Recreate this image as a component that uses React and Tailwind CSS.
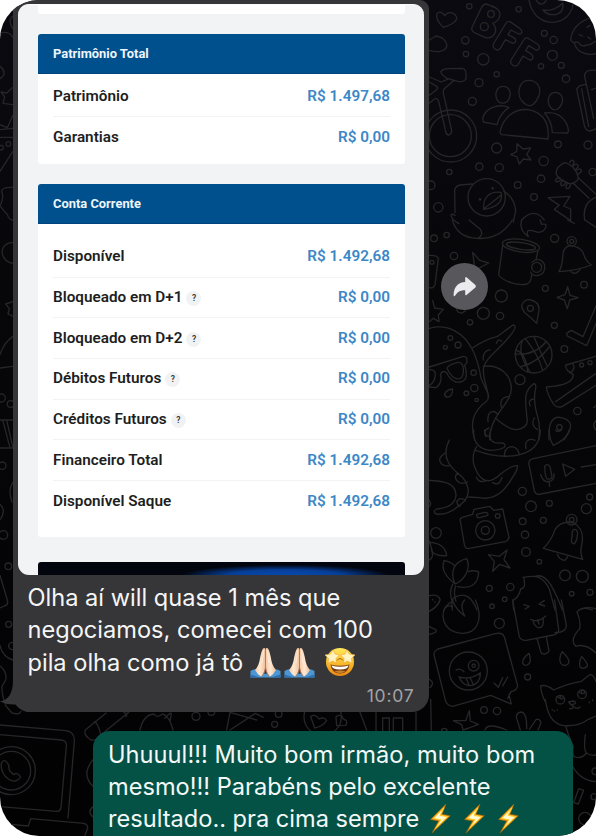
import React from "react";

const equity = [
  ["Patrimônio", "R$ 1.497,68"],
  ["Garantias", "R$ 0,00"],
];
const account = [
  ["Disponível", "R$ 1.492,68"],
  ["Bloqueado em D+1", "R$ 0,00", true],
  ["Bloqueado em D+2", "R$ 0,00", true],
  ["Débitos Futuros", "R$ 0,00", true],
  ["Créditos Futuros", "R$ 0,00", true],
  ["Financeiro Total", "R$ 1.492,68"],
  ["Disponível Saque", "R$ 1.492,68"],
];

function Rings({ items }) {
  return items.map(([x, y, r], i) => <circle key={i} cx={x} cy={y} r={r} />);
}

function Wallpaper() {
  return (
    <svg
      className="absolute inset-0"
      width="596"
      height="836"
      viewBox="0 0 596 836"
      fill="none"
      stroke="#262628"
      strokeWidth="4"
      strokeLinejoin="round"
      strokeLinecap="round"
    >
      {/* bff, friends, bicycle, duck */}
      <g transform="translate(420 0) scale(.33333)">
        <Rings
          items={[[148, 19, 8], [296, 28, 8], [136, 121, 11], [138, 162, 8], [190, 178, 17], [230, 223, 8], [177, 248, 12], [157, 304, 12], [373, 100, 9], [401, 120, 11], [397, 166, 15], [363, 199, 8], [424, 196, 9], [438, 236, 11], [414, 433, 10], [504, 435, 12], [230, 444, 15], [371, 483, 14], [238, 503, 12], [178, 500, 11], [88, 516, 8], [363, 536, 11], [293, 555, 10], [342, 591, 10], [55, 622, 14], [32, 556, 13], [518, 516, 11], [213, 42, 10], [193, 80, 12]]}
        />
        <path d="M70 82C55 68 48 55 50 43C56 32 68 36 74 47C84 34 100 36 108 48C116 62 98 72 70 82Z" />
        <path d="M185 22L156 82Q153 92 163 98L195 112Q214 118 224 101C231 88 226 78 218 70C239 63 246 43 234 29Q224 20 198 12Q190 12 185 22Z" />
        <path d="M259 68L220 132C216 148 233 155 241 145L256 119L279 130C290 128 290 117 280 112L264 104L273 90L296 102C308 103 308 92 299 85L270 65Q263 62 259 68Z" />
        <path d="M313 117L273 180C268 194 286 203 294 194L309 168L329 180C342 180 341 166 331 160L317 152L326 137L349 151C361 149 361 137 352 132L323 114Q317 112 313 117Z" />
        <path d="M327 0C334 41 360 66 397 67C431 65 455 44 459 12M348 0C357 15 369 17 378 2M369 30Q400 36 428 10Q432 37 409 43Q383 48 369 30Z" />
        <path d="M492 62C465 76 450 103 453 122C470 138 467 116 478 130C486 146 500 132 510 134L528 123M492 62C510 50 524 54 530 61M463 130C471 158 504 169 530 160M478 104L488 108M501 82L510 76M503 111L512 117" />
        <path d="M28 120L48 108Q77 112 81 136C78 153 55 160 28 151" />
        <circle cx="92" cy="408" r="78" />
        <circle cx="91" cy="407" r="63" />
        <path d="M62 215Q71 205 87 206L126 205Q139 207 138 225V237Q131 248 113 244L82 235Q66 228 62 215ZM28 231L64 246L87 236L101 242L73 266Q67 274 72 288L95 392Q94 404 85 405Q78 404 77 394L57 308Q51 288 41 299L28 309M28 246L51 260Q55 265 49 270L28 286" />
        <path d="M249 259C267 259 275 278 268 294C262 312 238 316 230 296C223 277 233 259 249 259ZM326 241C351 241 365 262 357 286C350 307 333 325 317 313C296 298 293 276 301 257Q309 241 326 241ZM406 277C424 278 431 294 426 309C420 327 405 336 393 324C379 309 383 278 406 277Z" />
        <path d="M188 355C195 326 231 309 267 322Q239 341 231 374L190 366ZM240 396C250 350 285 325 325 329C366 337 389 365 384 417L245 404Q240 402 240 396ZM374 339Q417 332 438 368Q449 388 443 399L397 398Q396 365 374 339Z" />
        <path d="M291 431L309 447L332 444L320 463L333 480L310 477L298 492L291 471L272 464L290 455Z" />
        <path d="M497 253L481 257Q469 262 471 272L493 377Q498 392 510 393L528 387M528 211Q492 207 494 230L521 356M485 267L506 379M515 269L528 264" />
        <circle cx="200" cy="592" r="56" />
        <circle cx="218" cy="565" r="2" />
        <circle cx="180" cy="598" r="2" />
        <path d="M191 628C188 591 211 572 243 577C251 607 226 624 191 628ZM192 626L245 584M157 552L120 555Q106 558 104 571L105 638M105 646Q92 639 93 647Q96 660 117 671M251 573Q284 594 287 631L280 666M305 660Q342 620 373 660" />
        <path d="M384 593L450 589L431 618L452 627L452 662L403 628L418 616Z" />
        <path d="M433 488Q406 502 409 522Q413 538 448 551Q466 553 475 536C472 512 454 491 433 488ZM449 487Q455 475 463 486L458 497M461 497Q470 487 475 499L467 509M471 510Q482 502 485 514L475 522M420 532Q405 535 407 543Q413 549 424 538M430 540Q417 551 425 557Q433 558 438 545M442 551Q434 562 441 566Q451 566 451 553M475 533L528 583M458 548L507 595M528 592Q486 608 494 660" />
      </g>
      {/* mug, bell, octopus, ball, shoe */}
      <g transform="translate(420 220) scale(.33333)">
        <Rings items={[[42, 55, 10], [80, 45, 8], [102, 108, 11], [404, 55, 12], [492, 194, 10], [376, 205, 9], [244, 228, 18], [190, 280, 18], [240, 288, 11], [150, 307, 8], [403, 316, 9], [433, 387, 10], [300, 479, 15], [472, 573, 11], [114, 375, 9], [91, 354, 7], [76, 382, 6], [161, 458, 8], [163, 504, 11], [139, 520, 7], [170, 540, 5], [36, 127, 6], [455, 64, 14], [455, 64, 6], [331, 265, 9], [418, 622, 8]]} />
        <path d="M97 0Q112 53 171 55Q240 60 277 0M147 0L181 28Q192 45 174 55M305 0Q296 29 325 50Q311 20 354 37Q374 36 378 19Q380 10 365 13L360 0M443 0L463 10M495 0L528 22" />
        <ellipse cx="303" cy="77" rx="56" ry="19" transform="rotate(8 303 77)" />
        <ellipse cx="303" cy="78" rx="44" ry="10" transform="rotate(8 303 78)" />
        <path d="M248 76L236 165C248 183 294 199 321 192Q334 186 335 165M354 92L348 119" />
        <path d="M336 126Q358 109 373 132Q379 163 350 167Q336 167 332 156" />
        <circle cx="350" cy="142" r="15" />
        <path d="M417 155Q427 138 429 101Q431 82 450 76Q481 79 490 100Q497 124 514 135Q470 152 417 155ZM453 155Q466 167 480 149M158 97L179 121L206 129L170 148L163 136ZM28 106Q54 105 55 116L45 194Q40 206 28 203" />
        <path d="M443 200L450 226L475 233L449 240L442 266L433 240L411 232L435 224ZM350 310Q332 292 316 280Q301 261 307 252Q317 235 333 240Q358 246 357 270ZM528 258L489 350L454 331Q435 340 442 348L500 377L528 311" />
        <path d="M38 242L44 264L70 268L55 285L57 305L40 295L28 305M110 267Q112 280 126 279L137 272" />
        <circle cx="341" cy="404" r="55" />
        <path d="M341 349Q361 396 382 439M315 355Q355 404 368 451M285 402Q344 407 378 366M301 441Q353 428 388 381M307 361Q291 400 331 457M287 390Q318 398 323 456" />
        <path d="M28 325C85 309 132 340 157 388Q176 428 183 475L200 512Q212 531 199 544C154 578 151 614 164 660M157 384Q198 357 231 350L279 315Q288 316 284 327C256 380 191 409 190 451C191 493 209 515 204 534M190 439C238 432 273 464 274 505C274 554 209 582 209 660M226 594Q269 631 290 629Q320 625 322 604C314 535 311 510 343 490Q349 493 347 505Q338 540 353 590Q362 620 356 660" />
        <path d="M190 420Q187 393 210 389M229 370Q234 354 245 364M245 563Q235 533 267 529M204 605Q201 574 222 574L235 583M198 650Q187 631 207 624M331 558Q322 540 340 537M352 629Q331 615 343 594" />
        <path d="M28 441L130 409Q142 408 141 427L134 436Q142 459 137 475Q128 489 108 486Q91 482 79 457Q66 451 62 462Q67 493 47 503L28 501M81 445Q83 435 113 427Q129 426 130 446Q132 471 119 476Q97 480 81 445ZM28 449Q45 449 46 461Q46 486 28 496M74 522Q79 509 98 507Q97 533 81 531Q73 529 74 522Z" />
        <path d="M528 409L438 435Q434 439 443 452L459 463Q463 495 379 501Q381 523 402 554Q413 566 427 559L528 496M450 459Q468 446 459 433M407 545L528 460" />
        <circle cx="485" cy="435" r="6" />
        <circle cx="510" cy="428" r="6" />
        <path d="M387 660Q383 589 419 592Q465 600 446 638L432 660M528 557L521 563M528 602Q514 616 528 630" />
      </g>
      {/* camera, voice note, bell, flower */}
      <g transform="translate(420 430) scale(.33333)">
        <Rings items={[[307, 184, 12], [333, 229, 16], [388, 220, 9], [370, 271, 9], [308, 274, 10], [315, 314, 11], [318, 366, 13], [358, 395, 7], [509, 201, 9], [499, 236, 15], [435, 436, 16], [487, 439, 18], [455, 491, 7], [510, 487, 9], [208, 475, 9], [271, 471, 11], [254, 508, 7], [216, 529, 7], [196, 301, 29], [196, 301, 12], [233, 258, 7], [455, 269, 16], [455, 269, 7], [48, 309, 16]]} />
        <path d="M161 0Q158 54 210 61Q239 61 254 51Q258 38 244 39C217 42 204 30 212 0M207 19Q193 17 194 0M170 50Q152 78 164 111Q191 181 242 132Q277 104 293 107Q292 123 277 143Q237 215 179 203L146 201M167 61C254 93 361 85 361 0M318 56Q312 27 337 28L345 31M253 80Q253 50 277 50Q296 55 297 74M169 142Q176 161 201 151M218 158Q238 170 246 142" />
        <path d="M88 30C61 83 92 114 126 140Q168 193 115 229Q81 257 48 252Q36 245 50 237Q106 232 108 195C106 156 71 155 28 151M76 69Q49 85 65 102Q75 111 89 106M113 129Q97 144 118 158Q132 162 142 156M120 229Q101 216 120 206Q132 205 136 213M28 211L32 222L28 230" />
        <path d="M388 0Q387 26 400 46Q441 28 448 0M425 0Q411 9 407 0M528 47L340 86Q324 90 327 103L343 183Q348 196 362 192L528 160M374 110Q380 98 390 110L396 140Q395 149 383 147Q375 145 374 110ZM362 134Q370 158 387 155Q404 151 402 131M387 154L389 169M428 102L464 118L437 139ZM484 111L528 104" />
        <path d="M121 273Q118 266 127 262L158 253L162 238L209 229L221 241L248 237L267 322Q265 332 256 335L144 356Q136 356 133 343ZM170 253L194 247Q207 248 203 256L179 263Q169 264 170 253Z" />
        <path d="M205 374L238 379L261 360L252 389L270 414L239 403L218 424L223 394ZM370 355Q394 333 405 299Q423 270 462 279Q495 298 485 345Q479 370 488 388ZM412 373Q418 391 435 391L443 380M464 298Q454 300 457 317Q449 344 464 341C474 325 477 297 464 298Z" />
        <path d="M105 462C64 430 67 409 72 391Q94 396 103 406M105 462C88 424 103 395 140 386C153 412 137 449 105 462ZM145 425Q157 419 176 426Q174 482 112 470M98 463Q86 485 97 516M107 468Q99 486 108 514M97 540Q91 503 109 500Q148 481 171 540M28 337Q75 339 80 377Q51 379 38 367L28 333M28 390Q44 380 34 360M28 497Q54 491 60 508Q56 525 36 540M38 508V510M45 515V517M71 540Q82 522 98 530" />
        <path d="M281 540L278 512Q297 502 302 477Q317 473 313 457Q313 443 309 442C349 435 368 437 388 477L405 540M345 439Q370 430 392 464Q411 497 427 540M311 524L328 529L315 537M373 512L357 522L374 528M476 540Q494 530 518 540" />
      </g>
      {/* ice cream, sticker, cat */}
      <g transform="translate(420 600) scale(.33333)">
        <Rings items={[[238, 70, 15], [323, 231, 9], [192, 330, 10], [231, 333, 11], [145, 213, 57], [161, 197, 16], [161, 197, 5], [421, 299, 13], [486, 283, 13], [425, 292, 5], [489, 276, 5], [526, 514, 10], [522, 590, 9], [495, 656, 19], [73, 393, 8]]} />
        <path d="M97 0Q107 28 134 48Q118 14 134 0M98 4Q69 16 69 49C73 99 125 107 154 94C188 72 178 26 166 0M28 34Q56 18 60 0M28 80L47 89Q54 98 28 103M28 238Q46 248 30 263M32 298L34 390M278 0L298 111Q304 122 318 121L400 105Q416 101 416 89L404 0M424 0L439 75Q440 90 422 96L405 98M351 115L363 158Q375 168 387 154L379 110M332 58Q355 69 377 48M339 62Q345 85 360 83Q373 78 369 54M353 60L357 72" />
        <path d="M42 165Q41 153 54 147L226 101Q247 96 253 111L293 257Q291 272 273 275L267 285L274 312L212 286L98 319Q84 319 77 304ZM273 276L263 295M108 211Q119 202 132 215M117 231Q153 240 181 218Q181 253 151 257Q128 257 117 231ZM139 236L147 255M151 234L159 252M222 249L235 262L248 233M248 258L263 231" />
        <path d="M308 190Q307 174 327 160Q338 192 318 196Q310 196 308 190ZM422 190Q415 172 427 155Q451 178 446 190Q434 203 422 190ZM480 201Q476 184 485 170Q504 188 502 199Q490 210 480 201ZM528 26Q487 16 471 36Q483 62 479 86C457 110 453 126 467 139Q496 129 528 159" />
        <path d="M376 306Q362 277 362 258Q378 252 401 270Q442 251 484 244L511 223Q522 225 528 245M376 299C382 341 395 371 431 377Q475 380 503 359L528 348M410 290L421 294M477 276L486 281M446 306L460 303Q469 304 465 311L453 315ZM458 315Q462 328 449 326M460 319Q470 330 480 321M397 328V330M403 332V334M412 329V331M508 306V308M518 300V302M438 381Q449 418 460 440Q455 456 462 470Q484 479 499 459Q490 446 496 404M499 459Q517 470 528 464M458 500Q483 543 528 545" />
        <path d="M100 362L137 362L148 332L151 363L175 373L147 384L129 390L125 374ZM301 390L289 352Q289 337 305 336Q321 340 320 386M328 388L348 359Q358 354 363 368L354 390M195 390Q202 366 260 390M476 566L491 571L475 612L461 608Z" />
      </g>
      {/* left margin, laptop and the strip between the bubbles */}
      <g transform="scale(.33333)">
        <Rings items={[[3, 443, 7], [25, 432, 7], [4, 1194, 12], [32, 1212, 10], [7, 1397, 11], [10, 1605, 13], [25, 1699, 10], [26, 1873, 9], [37, 1938, 11]]} />
        <path d="M39 48Q22 60 38 85M0 100Q25 91 38 111M0 199Q25 220 0 236M3 276L20 279L37 263M3 276L14 290L9 310L38 314M38 347L22 383L0 374M0 389L38 385M0 412H38M0 514L38 455M38 562Q0 561 6 578Q12 595 0 618L22 644Q27 660 38 660M38 727Q6 730 6 758Q12 786 38 790M17 912L38 905M17 912L28 926L24 942L38 948M38 1010Q11 1029 0 1064M0 1104L38 1099M0 1260H38M20 1260L38 1340M8 1260L30 1343M0 1344H38M38 1448Q23 1470 36 1506M0 1513Q20 1533 0 1559M0 1726L22 1800Q26 1814 14 1818L0 1824M0 1936Q7 1970 38 1980M0 1998Q22 2015 17 2040L6 2060Q5 2086 18 2118L36 2139Q56 2146 63 2134" />
        <path d="M0 2175L198 2192Q224 2195 223 2224L204 2454M0 2204L184 2220Q201 2222 199 2238L183 2424Q180 2435 170 2434L0 2420M0 2470L85 2478L92 2456L252 2470Q264 2474 263 2484L254 2508" />
        <circle cx="34" cy="2312" r="72" />
        <circle cx="34" cy="2312" r="58" />
        <path d="M4 2290C12 2276 18 2281 27 2297Q23 2311 41 2324Q51 2314 62 2331Q49 2352 25 2337Q1 2319 4 2290Z" />
        <path d="M318 2139L256 2190Q250 2204 270 2218Q285 2225 294 2212L386 2137M283 2165Q294 2169 302 2203M372 2137Q384 2142 378 2150M420 2190Q430 2144 462 2142Q470 2156 488 2142Q509 2150 519 2190M494 2155Q511 2136 514 2140L510 2165M680 2190L690 2137L770 2160M690 2190L766 2140L790 2152M1080 2137L1100 2190M1128 2137V2220M1148 2220V2154H1168V2220M1180 2220V2154H1208V2220M1248 2137V2220" />
        <path d="M932 2150Q947 2140 957 2157Q974 2149 980 2162Q967 2180 944 2184ZM1008 2150Q1025 2140 1030 2157Q1045 2160 1038 2176L1010 2177Z" />
        <Rings items={[[588, 2149, 12], [634, 2136, 10], [824, 2173, 9], [836, 2142, 10], [968, 2150, 56]]} />
        <path d="M280 2278Q241 2324 280 2360M280 2420Q259 2434 280 2452" />
      </g>
    </svg>
  );
}

function Hands() {
  return (
    <svg width="34" height="32" viewBox="0 0 34 32" className="shrink-0">
      <defs>
        <linearGradient id="skin" x1="0" x2="1">
          <stop offset="0" stopColor="#f5c8a5" />
          <stop offset=".45" stopColor="#ffe8d2" />
          <stop offset="1" stopColor="#efc09b" />
        </linearGradient>
      </defs>
      <path d="M1.5 24Q5 21.5 8 22.5L16.5 27L25 22.5Q28 21.5 31.5 24V30.5H1.5Z" fill="#4c96d4" />
      <path d="M1.5 27.5L11 30.5H1.5ZM31.5 27.5L22 30.5H31.5Z" fill="#2d70b2" />
      <path d="M14 1.5Q16 .5 16.3 2V21Q15 27 12 29.5Q8 27 6 23Q9 20 10.5 14Q12 5 14 1.5Z" fill="url(#skin)" />
      <path d="M19 1.5Q17 .5 16.7 2V21Q18 27 21 29.5Q25 27 27 23Q24 20 22.5 14Q21 5 19 1.5Z" fill="url(#skin)" />
      <path d="M16.5 2V20Q16.5 25 13 29M16.5 20Q17 26 20 29" fill="none" stroke="#bb7d62" strokeWidth=".9" />
      <path d="M14.8 3L13 16M18.2 3L20 16" fill="none" stroke="#fff0e0" strokeWidth=".8" />
    </svg>
  );
}

function StarFace() {
  return (
    <svg width="32" height="32" viewBox="0 0 32 32" className="shrink-0">
      <defs>
        <linearGradient id="face" x2="0" y2="1">
          <stop offset="0" stopColor="#ffe85b" />
          <stop offset=".5" stopColor="#fbc02e" />
          <stop offset="1" stopColor="#e98712" />
        </linearGradient>
      </defs>
      <circle cx="16" cy="15" r="14" fill="url(#face)" />
      <g fill="#fff3c2" stroke="#f3ae38" strokeWidth=".7" strokeLinejoin="round">
        <path d="M9 2.8L11 7L15.3 8L12 11.5L12.5 16L8.6 14L4 16.3L4.7 11.5L1 8L6.4 7.2Z" />
        <path d="M23 2.8L25 7L31 8L27.3 11.5L28 16.3L23.4 14L19.5 16L20 11.5L16.7 8L21 7Z" />
      </g>
      <path d="M13 13.5Q16 9.5 19 13.5" fill="none" stroke="#9b6114" strokeWidth="1" />
      <path d="M6.5 17.5Q16 20 25.5 17.5Q24.5 26.5 16 26.5Q7.5 26.5 6.5 17.5Z" fill="#793f13" />
      <path d="M7.5 18.5Q16 21 24.5 18.5Q24 22.5 16 22.5Q8 22.5 7.5 18.5Z" fill="#fff" />
      <path d="M10.5 24.5Q16 22.5 21.5 24.5Q16 27.5 10.5 24.5Z" fill="#c8822f" />
    </svg>
  );
}

function Bolt() {
  return (
    <svg width="33.7" height="32" viewBox="0 0 33.7 32" className="shrink-0">
      <path d="M17 1L1.5 16.5L9.7 18L3 30L21.3 12.8L13 11.2Z" fill="#f79b16" stroke="#9c6507" strokeWidth=".6" />
      <path d="M15 4.8L4.5 15.4L12 16.8L6.8 25.3L18.5 13.8L11 12.3Z" fill="#fffad1" stroke="#ffcf32" strokeWidth="1" />
    </svg>
  );
}

function Panel({ title, rows, body }) {
  return (
    <section className="overflow-hidden rounded-[3px] bg-white">
      <h2 className="flex h-[40.7px] items-center border-b border-[#00447d] bg-[#00508d] pl-[15px] text-[12.9px] font-bold text-[#edf5fa]">
        <span>{title}</span>
      </h2>
      <div className={body}>
        {rows.map(([label, value, help], i) => (
          <div
            key={label}
            className={`flex h-[40.7px] items-center text-[15.3px] font-semibold ${i < rows.length - 1 ? "border-b border-[#f2f3f4]" : ""}`}
          >
            <span className="text-[#1d1e21]">{label}</span>
            {help && (
              <span className="mt-[2px] ml-[4px] flex size-[15px] items-center justify-center rounded-full bg-[#f1f2f4] text-[8.5px] text-[#333]">
                ?
              </span>
            )}
            <span className="ml-auto text-[#3c87c6]">{value}</span>
          </div>
        ))}
      </div>
    </section>
  );
}

export default function App() {
  return (
    <div className="h-[836px] w-[596px] bg-white">
      <main className="relative h-full w-full overflow-hidden rounded-[39px] bg-gradient-to-b from-[#0a0a10] via-[#060608] to-[#020203]">
        <Wallpaper />
        <div className="relative flex h-full flex-col">
          <article className="relative ml-[13px] h-[712px] w-[416px] shrink-0 rounded-t-[9px] rounded-b-[17px] bg-[#363638] pt-[4px] pl-[5px]">
            <svg className="absolute -left-[13px] top-[680px]" width="32" height="32" viewBox="0 0 32 32" fill="#363638">
              <path d="M13 0C13 14 8 20 0 21.5Q7 25 15.5 24.5Q20 30 27 32H32V0Z" />
            </svg>
            <div className="h-[571px] w-[405.5px] overflow-hidden rounded-[11px] border-t border-[#fafbfc] bg-[#f1f3f5] pr-[18.5px] pl-[20px] font-[Roboto,sans-serif]">
              <div className="h-[8.5px] rounded-b-[3px] bg-white" />
              <div className="mt-[20px] flex flex-col gap-[19.5px]">
                <Panel title="Patrimônio Total" rows={equity} body="h-[90px] pt-[2px] px-[15px]" />
                <Panel title="Conta Corrente" rows={account} body="h-[313px] pt-[12.5px] px-[15px]" />
              </div>
              <div className="mt-[24.5px] h-[14px] rounded-t-[3px] bg-[#02050e] pt-[3px]">
                <div className="ml-[145px] h-full w-[205px] bg-[radial-gradient(ellipse_at_50%_100%,#084bb0_0%,#063f99_40%,#02050e_72%)]" />
              </div>
            </div>
            <p className="mt-[7px] ml-[9.5px] font-[Inter,sans-serif] text-[23.6px] leading-[32.3px] whitespace-nowrap text-[#f5f5f6]">
              <span className="block">Olha aí will quase 1 mês que</span>
              <span className="block">negociamos, comecei com 100</span>
              <span className="flex items-center">
                <span>pila olha como já tô</span>
                <span className="ml-[6px] flex">
                  <Hands />
                  <Hands />
                </span>
                <span className="ml-[6.5px]">
                  <StarFace />
                </span>
              </span>
            </p>
            <time className="mt-[5px] mr-[14.5px] block text-right font-[Inter,sans-serif] text-[17.5px] leading-[24px] tracking-[.8px] text-[#a3a3a6]">10:07</time>
          </article>
          <article className="mt-[18.5px] ml-[93px] h-[130px] w-[479.5px] shrink-0 rounded-t-[17px] bg-[#045246] pt-[8px] pl-[15px]">
            <p className="font-[Inter,sans-serif] text-[23.6px] leading-[32.2px] whitespace-nowrap text-[#f3f8f7]">
              <span className="block tracking-[.05px]">Uhuuul!!! Muito bom irmão, muito bom</span>
              <span className="block">mesmo!!! Parabéns pelo excelente</span>
              <span className="flex items-center">
                <span>resultado.. pra cima sempre</span>
                <span className="ml-[10px] flex">
                  <Bolt />
                  <Bolt />
                  <Bolt />
                </span>
              </span>
            </p>
          </article>
        </div>
        <button aria-label="Encaminhar" className="absolute top-[263px] left-[441px] flex size-[47px] items-center justify-center rounded-full bg-[#58585c]">
          <svg width="24" height="22" viewBox="0 0 24 22">
            <path d="M12.2 2.2Q12.2.3 13.8 1.5L22.4 9Q23.5 10.2 22.4 11.4L13.8 18.8Q12.2 20.2 12.2 18V14.3C6.8 14.2 4 16.5 2.3 19.5Q.5 21.5.6 18.5C1 10.8 5.2 6.5 12.2 6.1Z" fill="#ebebed" />
          </svg>
        </button>
      </main>
    </div>
  );
}
